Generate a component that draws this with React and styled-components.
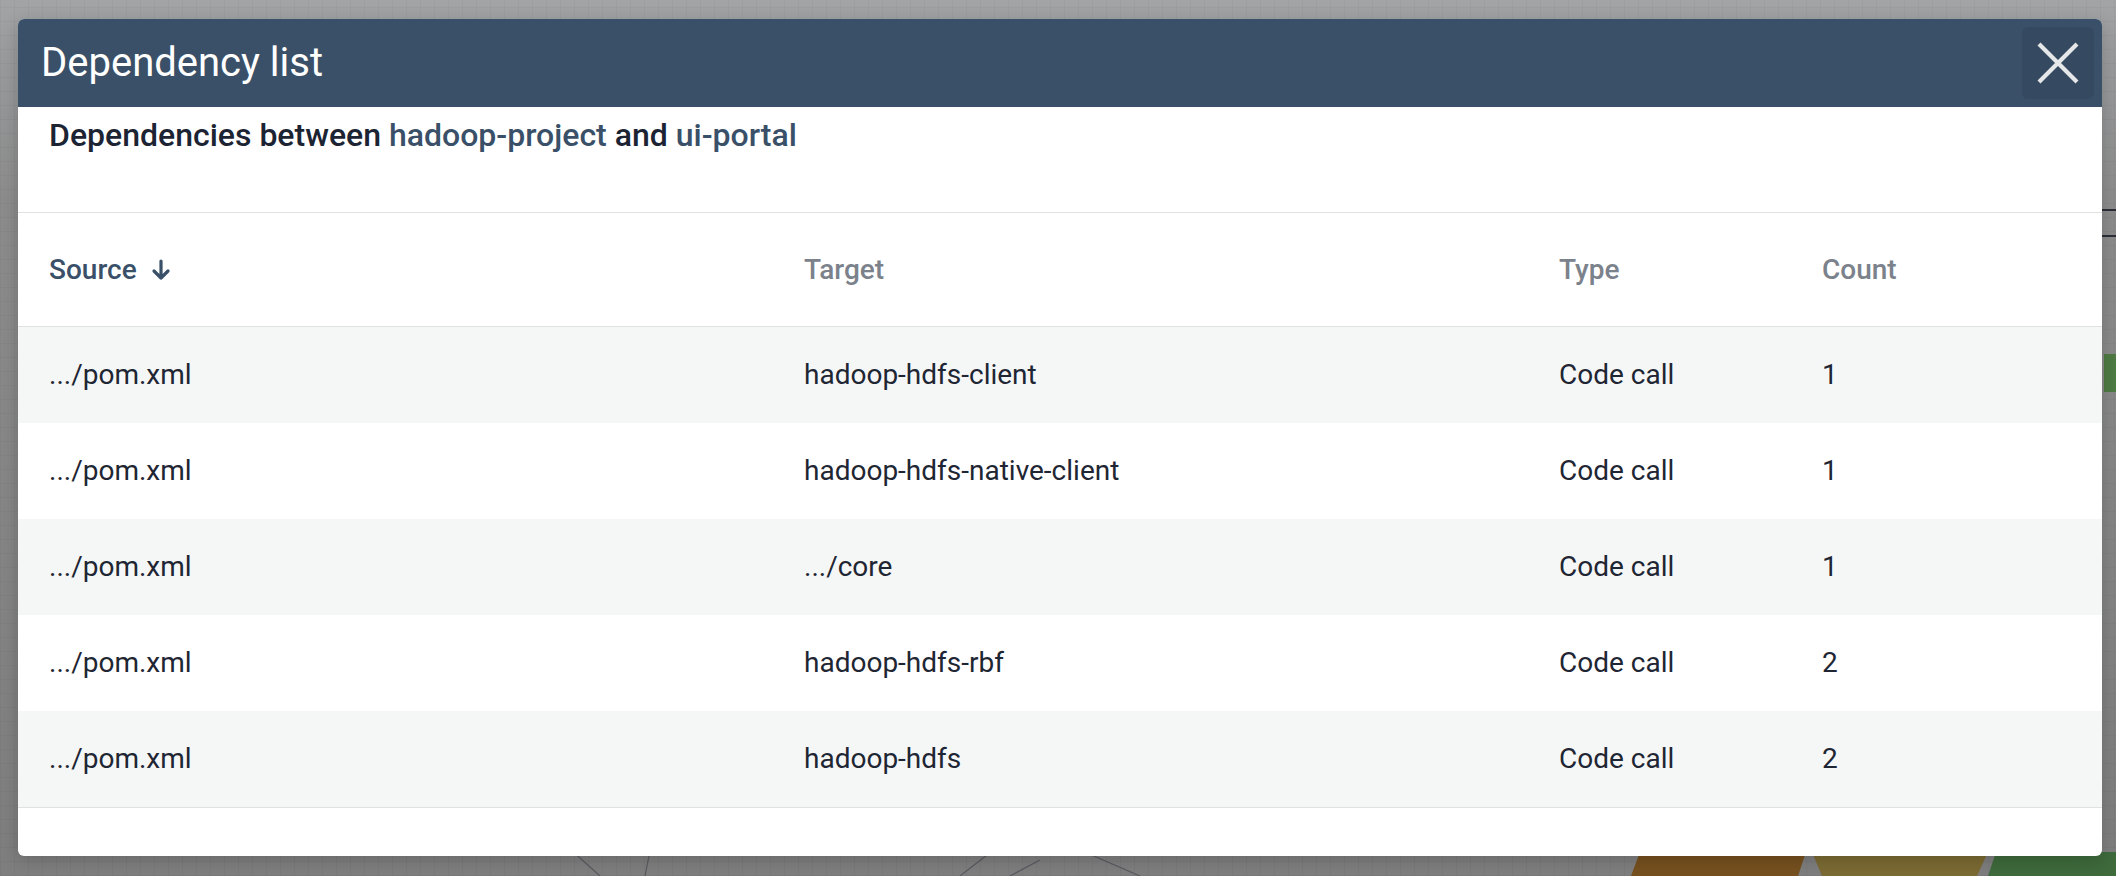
import React from "react";
import styled, { createGlobalStyle } from "styled-components";

const GlobalStyle = createGlobalStyle`
  html, body {
    margin: 0;
    padding: 0;
  }
  body {
    font-family: Roboto, "Liberation Sans", sans-serif;
    overflow: hidden;
  }
`;

const Backdrop = styled.div`
  position: relative;
  box-sizing: border-box;
  width: 2116px;
  height: 876px;
  padding: 19px 14px 0 18px;
  overflow: hidden;
  background-color: #8a8b8c;
  background-image: repeating-linear-gradient(
      0deg,
      rgba(0, 0, 0, 0.03) 0 1px,
      transparent 1px 14px
    ),
    repeating-linear-gradient(
      90deg,
      rgba(0, 0, 0, 0.03) 0 1px,
      transparent 1px 14px
    ),
    linear-gradient(#a3a4a6 0, #9a9b9d 60px, #8c8c8c 200px, #7e7e7e 876px);
`;

const Canvas = styled.svg`
  position: absolute;
  left: 0;
  top: 0;
  width: 2116px;
  height: 876px;
`;

const Modal = styled.div`
  position: relative;
  z-index: 1;
  display: flex;
  flex-direction: column;
  width: 2084px;
  height: 837px;
  background: #ffffff;
  border-radius: 6px;
  overflow: hidden;
  box-shadow: 0 4px 18px rgba(0, 0, 0, 0.18);
`;

const Header = styled.div`
  display: flex;
  align-items: center;
  justify-content: space-between;
  flex: 0 0 88px;
  padding: 0 8px 0 23px;
  background: #3a5068;
`;

const Title = styled.h2`
  margin: 0;
  font-size: 40px;
  font-weight: 400;
  line-height: 48px;
  color: #ffffff;
`;

const CloseButton = styled.button`
  display: flex;
  align-items: center;
  justify-content: center;
  width: 72px;
  height: 72px;
  padding: 0;
  border: none;
  border-radius: 6px;
  background: #354a61;
  cursor: pointer;
`;

const Subtitle = styled.p`
  margin: 0;
  padding: 8px 31px 57px;
  font-size: 32px;
  font-weight: 500;
  line-height: 40px;
  color: #1c2433;
`;

const Link = styled.span`
  color: #3a5068;
`;

const Table = styled.div`
  border-top: 1px solid #e0e1e1;
  border-bottom: 1px solid #e0e1e1;
`;

const Row = styled.div`
  display: grid;
  grid-template-columns: 755px 755px 263px 1fr;
  align-items: center;
  height: ${(p) => (p.$head ? "113px" : "96px")};
  background: ${(p) => (p.$striped ? "#f5f7f7" : "#ffffff")};
  border-bottom: ${(p) => (p.$head ? "1px solid #e0e1e1" : "none")};
`;

const HeadCell = styled.div`
  display: flex;
  align-items: center;
  gap: 14px;
  padding-left: 31px;
  font-size: 28px;
  font-weight: 500;
  line-height: 40px;
  color: ${(p) => (p.$active ? "#3a5068" : "#7b828b")};
`;

const Cell = styled.div`
  padding-left: 31px;
  font-size: 28px;
  font-weight: 400;
  line-height: 40px;
  color: #1f2633;
`;

const Footer = styled.div`
  flex: 1;
`;

const rows = [
  [".../pom.xml", "hadoop-hdfs-client", "Code call", "1"],
  [".../pom.xml", "hadoop-hdfs-native-client", "Code call", "1"],
  [".../pom.xml", ".../core", "Code call", "1"],
  [".../pom.xml", "hadoop-hdfs-rbf", "Code call", "2"],
  [".../pom.xml", "hadoop-hdfs", "Code call", "2"],
];

function SortArrow() {
  return (
    <svg width="20" height="22" viewBox="0 0 20 22" fill="none">
      <path
        d="M10 2v17M3 12l7 7 7-7"
        stroke="#3a5068"
        strokeWidth="3.2"
        strokeLinecap="round"
        strokeLinejoin="round"
      />
    </svg>
  );
}

function CloseIcon() {
  return (
    <svg width="42" height="42" viewBox="0 0 42 42">
      <path
        d="M2 2L40 40M40 2L2 40"
        stroke="#e6e7e8"
        strokeWidth="4.2"
      />
    </svg>
  );
}

function GraphBehind() {
  // the dependency graph that sits under the dialog
  return (
    <Canvas viewBox="0 0 2116 876">
      <g stroke="#3d3d4a" strokeWidth="1.2" opacity="0.55" fill="none">
        <path d="M660 800L645 876" />
        <path d="M560 840L600 876" />
        <path d="M1000 845L960 876" />
        <path d="M1040 860L1010 876" />
        <path d="M1080 850L1140 876" />
      </g>
      <path d="M1640 852L1631 876H1798L1806 852Z" fill="#76501f" />
      <path d="M1812 852L1822 876H1977L1988 852Z" fill="#7b6a33" />
      <path d="M1996 852L1988 876H2116V852Z" fill="#3e6a3c" />
      <rect x="2104" y="354" width="12" height="38" fill="#4e7a44" />
      <path d="M2102 210H2116M2102 236H2116" stroke="#2c2f36" strokeWidth="2" />
    </Canvas>
  );
}

export default function App() {
  return (
    <>
      <GlobalStyle />
      <Backdrop>
        <GraphBehind />
        <Modal>
          <Header>
            <Title>Dependency list</Title>
            <CloseButton aria-label="Close">
              <CloseIcon />
            </CloseButton>
          </Header>
          <Subtitle>
            Dependencies between <Link>hadoop-project</Link> and{" "}
            <Link>ui-portal</Link>
          </Subtitle>
          <Table>
            <Row $head>
              <HeadCell $active>
                Source <SortArrow />
              </HeadCell>
              <HeadCell>Target</HeadCell>
              <HeadCell>Type</HeadCell>
              <HeadCell>Count</HeadCell>
            </Row>
            {rows.map((r, i) => (
              <Row key={i} $striped={i % 2 === 0}>
                {r.map((c, j) => (
                  <Cell key={j}>{c}</Cell>
                ))}
              </Row>
            ))}
          </Table>
          <Footer />
        </Modal>
      </Backdrop>
    </>
  );
}
